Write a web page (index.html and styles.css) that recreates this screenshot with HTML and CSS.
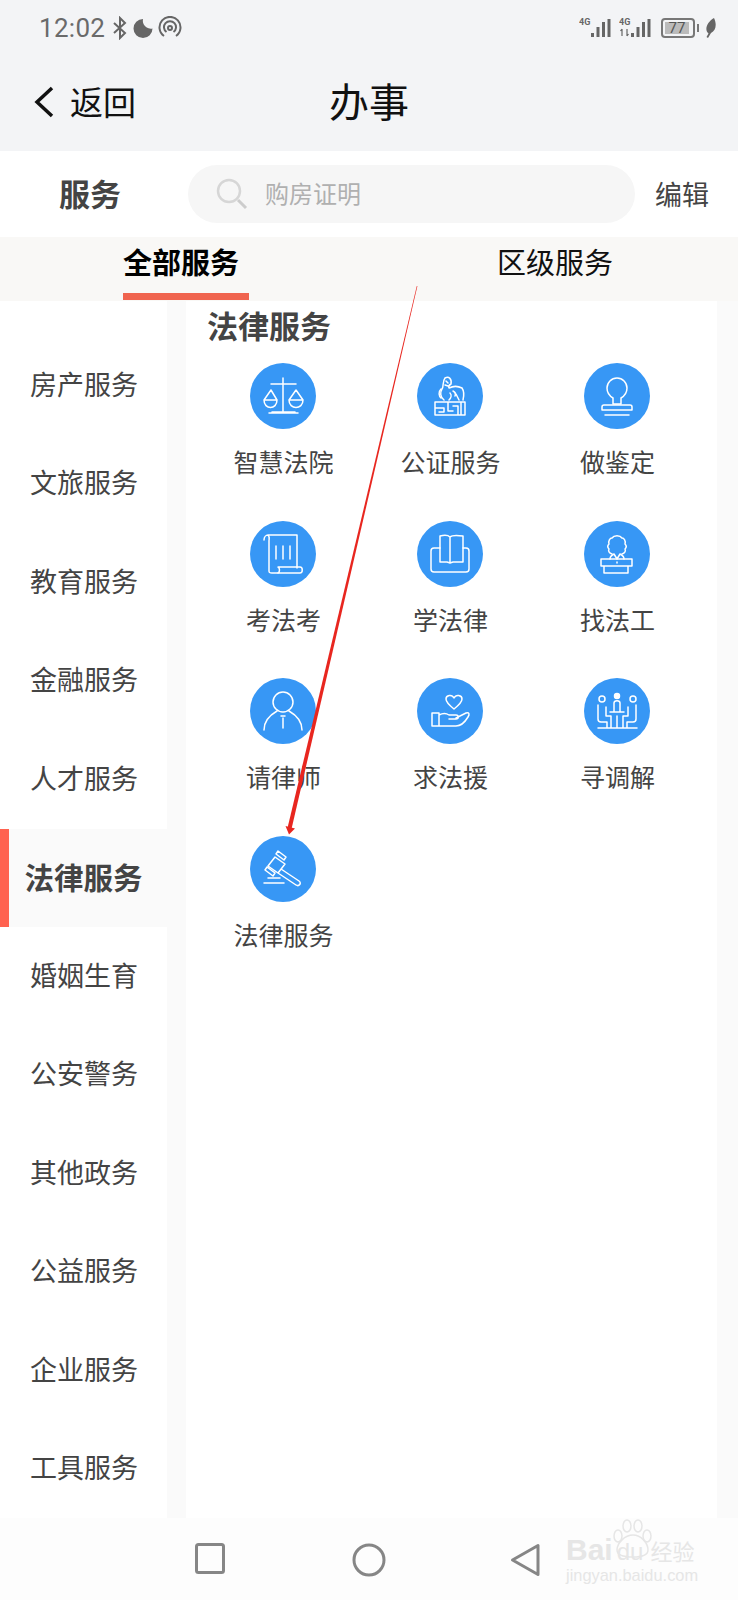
FILE: index.html
```html
<!DOCTYPE html>
<html lang="zh-CN">
<head>
<meta charset="utf-8">
<title>办事</title>
<link rel="stylesheet" href="styles.css">
</head>
<body>
<div class="page">
  <div class="status">
    <div class="status-left">
      <span class="time">12:02</span>
      <svg class="si" width="16" height="24" viewBox="0 0 16 24"><path class="st" d="M2 7l11 10-5 5V2l5 5L2 17"/></svg>
      <svg class="si" width="20" height="24" viewBox="0 0 20 24"><path class="sf" d="M10 3A8 8 0 0 0 19.500 12.500A9.500 9.500 0 1 1 10 3z"/></svg>
      <svg class="si" width="24" height="24" viewBox="0 0 24 24"><path class="st" d="M6 20a10.500 10.500 0 1 1 12 0M8.500 16a6 6 0 1 1 7 0"/><circle class="st" cx="12" cy="12" r="2"/></svg>
    </div>
    <div class="status-right">
      <svg class="sig" width="34" height="24" viewBox="0 0 34 24"><text class="g4" x="0" y="9">4G</text><rect class="sb" x="12" y="17" width="3" height="4"/><rect class="sb" x="17.500" y="11" width="3" height="10"/><rect class="sb" x="23" y="6" width="3" height="15"/><rect class="sb" x="28.500" y="3" width="3" height="18"/></svg>
      <svg class="sig" width="34" height="24" viewBox="0 0 34 24"><text class="g4" x="0" y="9">4G</text><path class="st1" d="M3 13v7M1.500 15L3 13M8 13v7M8 20l1.500-2"/><rect class="sb" x="12" y="17" width="3" height="4"/><rect class="sb" x="17.500" y="11" width="3" height="10"/><rect class="sb" x="23" y="6" width="3" height="15"/><rect class="sb" x="28.500" y="3" width="3" height="18"/></svg>
      <div class="batt"><span class="batt-fill">77</span></div>
      <span class="batt-tip"></span>
      <svg class="leaf" width="12" height="22" viewBox="0 0 12 22"><path class="sf" d="M10 1c3 6 2 13-3 15l-3 5-1.500-1 2-3.500C0 13 3 5 10 1z"/></svg>
    </div>
  </div>

  <header class="head">
    <div class="back">
      <svg class="chev" width="20" height="32" viewBox="0 0 20 32"><path d="M18 2L3 16l15 14"/></svg>
      <span class="back-text">返回</span>
    </div>
    <h1 class="head-title">办事</h1>
  </header>

  <div class="search-row">
    <span class="search-label">服务</span>
    <div class="search">
      <svg class="lens" width="32" height="32" viewBox="0 0 32 32"><circle cx="13" cy="13" r="11"/><path class="lens-h" d="M22 22l8 8"/></svg>
      <span class="ph">购房证明</span>
    </div>
    <span class="edit">编辑</span>
  </div>

  <nav class="tabs">
    <div class="tab tab-on"><span>全部服务</span></div>
    <div class="tab"><span>区级服务</span></div>
  </nav>

  <div class="content">
    <aside class="side">
      <div class="side-item">房产服务</div>
      <div class="side-item">文旅服务</div>
      <div class="side-item">教育服务</div>
      <div class="side-item">金融服务</div>
      <div class="side-item">人才服务</div>
      <div class="side-item side-on">法律服务</div>
      <div class="side-item">婚姻生育</div>
      <div class="side-item">公安警务</div>
      <div class="side-item">其他政务</div>
      <div class="side-item">公益服务</div>
      <div class="side-item">企业服务</div>
      <div class="side-item">工具服务</div>
    </aside>
    <main class="main">
      <h2 class="main-title">法律服务</h2>
      <div class="grid">
        <div class="cell">
          <svg class="ic" viewBox="0 0 66 66"><circle class="disc" cx="33" cy="33" r="33"/><g class="ln"><path d="M33 15v33M21 21h25M22 49h23M19 50h29"/><path d="M21 27l-7 10h13zM14 37c0 10 13 10 13 0"/><path d="M46 27l-7 10h14zM39 37c0 10 14 10 14 0"/></g></svg>
          <span class="lab">智慧法院</span>
        </div>
        <div class="cell">
          <svg class="ic" viewBox="0 0 66 66"><circle class="disc" cx="33" cy="33" r="33"/><g class="ln"><path d="M27 37c-4-3-4-8-2-11 2-2 0-7 3-11 4-2 7 1 6 6-2 1-3 2-2 4 4-2 9-2 13 0 2 3 2 8 1 12"/><path d="M24 26c-3 3-2 7 0 9M29 18l2 2M28 22l3 1M33 30c2 2 1 5-1 7M39 31l3 6M36 28c2 1 3 3 2 5"/><path d="M18 39h30v13H18zM18 45h9v4h-5M31 39v9h5M36 43h5v9M44 39v13"/></g></svg>
          <span class="lab">公证服务</span>
        </div>
        <div class="cell">
          <svg class="ic" viewBox="0 0 66 66"><circle class="disc" cx="33" cy="33" r="33"/><g class="ln"><path d="M29 35c-5-3-6-8-6-10a10 10 0 0 1 20 0c0 2-1 7-6 10v6H29z"/><path d="M20 42h26a2 2 0 0 1 2 2v3H18v-3a2 2 0 0 1 2-2zM21 52h24"/></g></svg>
          <span class="lab">做鉴定</span>
        </div>
        <div class="cell">
          <svg class="ic" viewBox="0 0 66 66"><circle class="disc" cx="33" cy="33" r="33"/><g class="ln"><path d="M14 19c0-3 2-5 4-5h29v33M18 14c2 2 1 4 1 6v30c0 2 1 2 3 2h6"/><path d="M28 52c2-1 2-5 0-6h22c3 0 3 6 0 6zM26 25v13M33 25v13M40 25v13"/></g></svg>
          <span class="lab">考法考</span>
        </div>
        <div class="cell">
          <svg class="ic" viewBox="0 0 66 66"><circle class="disc" cx="33" cy="33" r="33"/><g class="ln"><path d="M23 27h-6a3 3 0 0 0-3 3v18a3 3 0 0 0 3 3h32a3 3 0 0 0 3-3V30a3 3 0 0 0-3-3h-3"/><path d="M23 15c4-1 8-1 10 1 2-2 6-2 13-1v26H36l-3 1-3-1h-7zM33 16v25"/></g></svg>
          <span class="lab">学法律</span>
        </div>
        <div class="cell">
          <svg class="ic" viewBox="0 0 66 66"><circle class="disc" cx="33" cy="33" r="33"/><g class="ln"><path d="M28 33c-3-1-4-3-3-5-2-2-1-4 0-5-1-3 1-6 3-6 2-3 8-3 10 0 2 0 4 3 3 6 1 1 2 3 0 5 1 2 0 4-3 5"/><path d="M26 38c0-2 2-4 4-5l3 5 3-5c2 1 4 3 4 5"/><path d="M17 38h31v7H17zM20 45v7h24v-7M33 41v1"/></g></svg>
          <span class="lab">找法工</span>
        </div>
        <div class="cell">
          <svg class="ic" viewBox="0 0 66 66"><circle class="disc" cx="33" cy="33" r="33"/><g class="ln"><circle cx="33" cy="24" r="10"/><path d="M14 52c0-9 6-15 13-19M52 52c0-9-6-15-13-19M31 38h4M33 40v10"/></g></svg>
          <span class="lab">请律师</span>
        </div>
        <div class="cell">
          <svg class="ic" viewBox="0 0 66 66"><circle class="disc" cx="33" cy="33" r="33"/><g class="ln"><path d="M37 31c-5-4-8-7-8-10 0-4 6-5 8-1 2-4 8-3 8 1 0 3-3 6-8 10z"/><path d="M15 35h7v13h-7zM22 37c4-2 7-2 10 0h7c3 0 3 4 0 4h-7M39 40l10-5c3-1 4 1 2 4-3 5-7 9-12 9H22"/></g></svg>
          <span class="lab">求法援</span>
        </div>
        <div class="cell">
          <svg class="ic" viewBox="0 0 66 66"><circle class="disc" cx="33" cy="33" r="33"/><g class="ln"><circle cx="18" cy="21" r="3"/><circle class="solid" cx="33" cy="18" r="2.500"/><circle cx="49" cy="21" r="3"/><path d="M14 27v14c0 2 1 3 3 3h6v6M22 29v9h5v12M52 27v14c0 2-1 3-3 3h-6v6M44 29v9h-5v12M14 50h39M26 34h14M30 34v-9c0-3 6-3 6 0v9M33 38v12"/></g></svg>
          <span class="lab">寻调解</span>
        </div>
        <div class="cell">
          <svg class="ic" viewBox="0 0 66 66"><circle class="disc" cx="33" cy="33" r="33"/><g class="ln"><path d="M25 21l10 7-7 9-10-7zM28 15l8 6-2 3-8-6zM17 31l8 6-2 3-8-6zM31 33l18 12c3 2 0 6-3 4L28 37"/><path d="M14 47h20M18 42h12"/></g></svg>
          <span class="lab">法律服务</span>
        </div>
      </div>
    </main>
    <div class="gutter"></div>
  </div>

  <footer class="softkeys">
    <svg class="nav-ic nav-sq" width="30" height="31" viewBox="0 0 30 31"><rect x="1.500" y="1.500" width="27" height="28" rx="2"/></svg>
    <svg class="nav-ic nav-ci" width="34" height="34" viewBox="0 0 34 34"><circle cx="17" cy="17" r="15"/></svg>
    <svg class="nav-ic nav-tr" width="31" height="34" viewBox="0 0 31 34"><path d="M28 2.500v29L2.500 17z"/></svg>
    <div class="mark">
      <svg class="paw" width="44" height="40" viewBox="0 0 44 40"><g class="paw-g"><ellipse cx="7" cy="17" rx="4" ry="6"/><ellipse cx="16" cy="7" rx="4" ry="6"/><ellipse cx="27" cy="7" rx="4" ry="6"/><ellipse cx="36" cy="17" rx="4" ry="6"/><path d="M22 16c8 0 15 8 15 15 0 5-6 7-15 7S6 36 6 31c0-7 8-15 16-15z"/></g></svg>
      <div class="mark-a"><span>Bai</span><span class="mark-du">du</span><span class="mark-cn">经验</span></div>
      <div class="mark-b">jingyan.baidu.com</div>
    </div>
  </footer>

  <svg class="annot" width="738" height="1600" viewBox="0 0 738 1600">
    <polygon class="arrow" points="416.800,286 417.400,286 291.500,829 287.500,828"/>
    <polygon class="arrow" points="285.500,826 295,828.500 289,834.500"/>
  </svg>
</div>
</body>
</html>
```

FILE: styles.css
```css
* { box-sizing: border-box; }
html, body { margin: 0; padding: 0; }
body { font-family: "Noto Sans CJK SC", "Noto Sans", sans-serif; background: #fff; }
.page { position: relative; width: 738px; height: 1600px; overflow: hidden; display: flex; flex-direction: column; background: #f3f4f6; }

.status { height: 55px; flex: none; display: flex; justify-content: space-between; align-items: center; padding: 0 22px 0 39px; color: #666; }
.status-left, .status-right { display: flex; align-items: center; }
.time { font-family: Roboto, sans-serif; font-size: 26px; color: #6a6a6a; margin-right: 7px; letter-spacing: .3px; }
.si { margin-right: 5px; }
.st { fill: none; stroke: #666; stroke-width: 2; }
.st1 { fill: none; stroke: #666; stroke-width: 1.200; }
.sf { fill: #666; }
.sb { fill: #666; }
.g4 { font-family: Roboto, sans-serif; font-size: 9px; font-weight: 700; fill: #666; }
.sig { margin-right: 6px; }
.batt { width: 34px; height: 20px; border: 2px solid #777; border-radius: 4px; padding: 2px; margin-left: 2px; }
.batt-fill { display: block; width: 24px; height: 12px; background: #bbb; font-family: Roboto, sans-serif; font-size: 15px; line-height: 12px; text-align: center; color: #555; }
.batt-tip { width: 2px; height: 8px; background: #777; margin: 0 5px 0 2px; }

.head { height: 96px; flex: none; position: relative; display: flex; align-items: center; justify-content: center; }
.back { position: absolute; left: 34px; top: 0; height: 92px; display: flex; align-items: center; gap: 16px; }
.chev { margin-top: 2px; }
.chev path { fill: none; stroke: #111; stroke-width: 3.500; }
.back-text { font-size: 33px; color: #111; line-height: 1; }
.head-title { margin: 0 0 6px; font-size: 40px; font-weight: 400; color: #111; line-height: 1; }

.search-row { height: 86px; flex: none; background: #fff; display: flex; align-items: center; }
.search-label { width: 188px; padding: 0 0 4px 59px; font-size: 31px; font-weight: 700; color: #444; line-height: 1; }
.search { width: 447px; height: 58px; background: #f6f6f6; border-radius: 29px; display: flex; align-items: center; padding-left: 28px; gap: 17px; }
.lens circle { fill: none; stroke: #d6d6d6; stroke-width: 2.500; }
.lens-h { stroke: #ccc; stroke-width: 3; }
.ph { font-size: 24px; color: #b0b0b0; line-height: 1; padding-bottom: 2px; }
.edit { margin-left: 20px; padding-bottom: 2px; font-size: 27px; color: #444; line-height: 1; }

.tabs { height: 64px; flex: none; display: flex; background: #f9f8f6; }
.tab { width: 366px; display: flex; justify-content: center; }
.tab span { height: 64px; font-size: 29px; line-height: 48px; color: #111; padding: 0 3px; }
.tab-on { width: 372px; justify-content: flex-start; padding-left: 123px; }
.tab-on span { width: 126px; height: 63px; padding: 0; font-weight: 700; border-bottom: 7px solid #f0644f; color: #000; white-space: nowrap; }

.content { flex: 1; min-height: 0; display: flex; background: #fafafa; height: 1217px; }
.side { width: 167px; flex: none; background: #fff; padding-top: 35px; }
.side-item { height: 98.5px; display: flex; align-items: center; justify-content: center; padding: 0 0 4px 1px; font-size: 27px; color: #444; }
.side-on { background: #fafafa; border-left: 9px solid #ff6250; padding: 0 9px 4px 0; font-size: 29.500px; font-weight: 700; white-space: nowrap; }
.main { width: 531px; flex: none; margin-left: 19px; background: #fff; padding-top: 4px; }
.gutter { flex: 1; }
.main-title { margin: 0 0 18px 21px; font-size: 31px; line-height: 40px; font-weight: 700; color: #444; }
.grid { display: grid; grid-template-columns: repeat(3, 167px); grid-auto-rows: 157.5px; padding-left: 13px; }
.cell { display: flex; flex-direction: column; align-items: center; }
.ic { width: 66px; height: 66px; display: block; }
.disc { fill: #3797f5; }
.ln { fill: none; stroke: #fff; stroke-width: 1.500; stroke-linejoin: round; stroke-linecap: round; }
.solid { fill: #fff; }
.lab { margin-top: 15px; padding-left: 2px; font-size: 25px; line-height: 34px; color: #444; white-space: nowrap; }

.softkeys { height: 82px; flex: none; background: #fdfdfd; position: relative; }
.nav-ic { position: absolute; }
.nav-ic rect, .nav-ic circle, .nav-ic path { fill: none; stroke: #868686; stroke-width: 3; stroke-linejoin: round; }
.nav-sq { left: 195px; top: 25px; }
.nav-ci { left: 352px; top: 25px; }
.nav-tr { left: 510px; top: 25px; }
.mark { position: absolute; left: 566px; top: 1px; width: 134px; color: #e6e6e6; }
.paw { position: absolute; left: 45px; top: 0; }
.paw-g { fill: none; stroke: #e6e6e6; stroke-width: 1.500; }
.mark-a { position: absolute; left: 0; top: 14px; display: flex; align-items: baseline; font-family: "Liberation Sans", sans-serif; font-size: 30px; line-height: 34px; font-weight: 700; white-space: nowrap; }
.mark-du { font-size: 24px; font-weight: 400; margin: 0 7px 0 4px; }
.mark-cn { font-family: "Noto Sans CJK SC", sans-serif; font-size: 22px; font-weight: 400; }
.mark-b { position: absolute; left: 0; top: 47px; font-family: "Liberation Sans", sans-serif; font-size: 16.400px; line-height: 18px; white-space: nowrap; }

.annot { position: absolute; left: 0; top: 0; pointer-events: none; }
.arrow { fill: #e8261f; }
```
